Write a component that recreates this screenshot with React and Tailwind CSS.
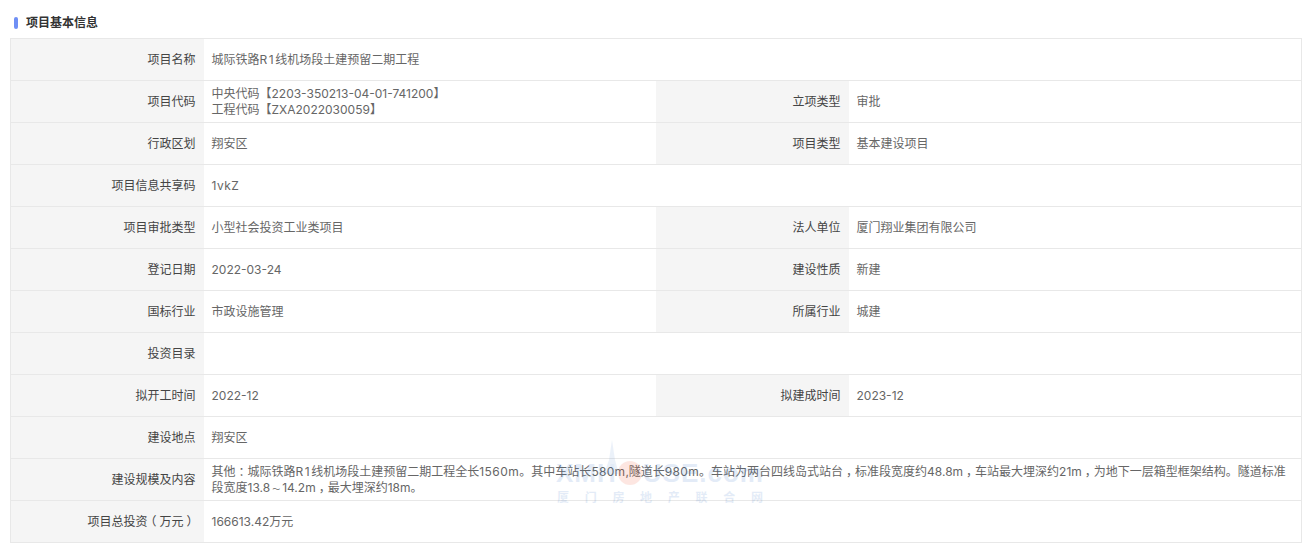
const FONT = "font-['Inter','Noto_Sans_CJK_SC',sans-serif]";

// full-width punctuation sits centred in its cell in the reference
function P({ children }) {
  return <span className="inline-block w-[12px] text-center [font-feature-settings:'halt']">{children}</span>;
}

const ROWS = [
  [["项目名称", <>城际铁路<span className="tracking-[1.5px]">R1</span>线机场段土建预留二期工程</>]],
  [["项目代码", <>中央代码【2203-350213-04-01-741200】<br />工程代码【ZXA2022030059】</>], ["立项类型", "审批"]],
  [["行政区划", "翔安区"], ["项目类型", "基本建设项目"]],
  [["项目信息共享码", <span className="tracking-[0.5px]">1vkZ</span>]],
  [["项目审批类型", "小型社会投资工业类项目"], ["法人单位", "厦门翔业集团有限公司"]],
  [["登记日期", "2022-03-24"], ["建设性质", "新建"]],
  [["国标行业", "市政设施管理"], ["所属行业", "城建"]],
  [["投资目录", ""]],
  [["拟开工时间", "2022-12"], ["拟建成时间", "2023-12"]],
  [["建设地点", "翔安区"]],
  [["建设规模及内容", (
    <div className="pt-[2px] pr-[6px]">
      其他<P>：</P>城际铁路<span className="tracking-[1.5px]">R1</span>线机场段土建预留二期工程全长<span className="tracking-[0.5px]">1560m</span>。其中车站长<span className="tracking-[0.3px]">580m</span>,隧道长<span className="tracking-[0.3px]">980m</span>。车站为两台四线岛式站台<P>，</P>标准段宽度约48.8m<P>，</P>车站最大埋深约21m<P>，</P>为地下一层箱型框架结构。隧道标准段宽度13.8<span className="inline-block w-[12px] text-center text-[8px]">～</span>14.2m<P>，</P>最大埋深约18m。
    </div>
  )]],
  [[<>项目总投资<P>（</P>万元<P>）</P></>, "166613.42万元"]],
];

function Label({ children }) {
  return (
    <th className="border-y border-[#e8e8e8] bg-[#f5f5f5] pr-[8px] text-right text-[12px] leading-[16px] font-normal text-[#444]">
      {children}
    </th>
  );
}

function Value({ children, span }) {
  return (
    <td colSpan={span} className="border-y border-[#e8e8e8] px-[8px] text-left text-[12px] leading-[16px] text-[#666]">
      {children}
    </td>
  );
}

function Watermark() {
  return (
    <div className="pointer-events-none absolute left-[555px] top-[440px] flex w-[210px] flex-col items-center opacity-[0.13]">
      <svg width="40" height="34" viewBox="0 0 40 34" className="absolute left-[37px] top-0">
        <path d="M20 0 L23 20 L27 34 L12 34 L17 20 Z" fill="#6f9bd8" />
      </svg>
      <div className="relative mt-[22px] flex h-[22px] items-center font-['Liberation_Sans',sans-serif] text-[26px] leading-none font-bold tracking-[1px] text-[#2f6fc4]">
        XMH
        <span className="mx-[1px] h-[24px] w-[24px] rounded-full bg-[#f04a24]" />
        USE.com
      </div>
      <div className="mt-[6px] flex w-full justify-between pr-[2px] pl-[2px] font-['Noto_Sans_CJK_SC',sans-serif] text-[12px] leading-[14px] font-bold text-[#2f6fc4]">
        {"厦门房地产联合网".split("").map((c, i) => <span key={i}>{c}</span>)}
      </div>
    </div>
  );
}

export default function App() {
  return (
    <div className={`relative h-[551px] w-[1307px] overflow-hidden bg-white ${FONT}`}>
      <div className="flex h-[38px] items-start pt-[16px] pl-[14px]">
        <span className="mt-[1px] h-[12px] w-[4px] rounded-[2px] bg-[#6f8ff5]" />
        <h3 className="ml-[8px] text-[12px] leading-[14px] font-bold text-[#333]">项目基本信息</h3>
      </div>
      <div className="px-[10px]">
        <table className="w-[1291px] table-fixed border-collapse border-x border-[#e8e8e8]">
          <colgroup>
            <col className="w-[193px]" />
            <col className="w-[452px]" />
            <col className="w-[193px]" />
            <col className="w-[453px]" />
          </colgroup>
          <tbody>
            {ROWS.map((cells, i) => (
              <tr key={i} className="h-[42px]">
                <Label>{cells[0][0]}</Label>
                <Value span={cells.length === 1 ? 3 : 1}>{cells[0][1]}</Value>
                {cells[1] && <Label>{cells[1][0]}</Label>}
                {cells[1] && <Value>{cells[1][1]}</Value>}
              </tr>
            ))}
          </tbody>
        </table>
      </div>
      <Watermark />
    </div>
  );
}
